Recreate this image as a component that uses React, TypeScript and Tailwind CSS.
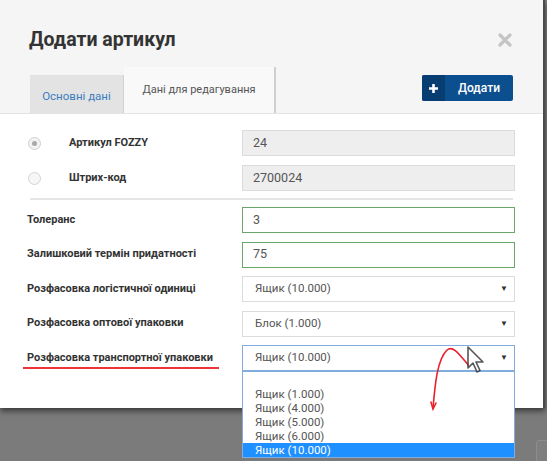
import React from 'react'

function TextBox({ value, tone }: { value: string; tone: 'gray' | 'green' }) {
  const cls =
    tone === 'gray'
      ? 'bg-[#eeeeee] border-[#dcdcdc]'
      : 'bg-white border-[#6aa56a]'
  return (
    <div className={`w-[273px] h-[26px] border ${cls} flex items-center pl-[10px] text-[12.5px] text-[#555]`}>
      {value}
    </div>
  )
}

function SelectBox({ value, active }: { value: string; active?: boolean }) {
  return (
    <div
      className={`w-[273px] h-[26px] border ${
        active ? 'border-[#82acdc]' : 'border-[#dcdcdc]'
      } bg-white flex items-center pl-[12px] pr-[6px] text-[11.5px] text-[#555]`}
    >
      <span className="flex-1">{value}</span>
      <span className="text-[8px] text-[#333]">▼</span>
    </div>
  )
}

function Row({ label, children }: { label: string; children: React.ReactNode }) {
  return (
    <div className="flex items-center h-[26px]">
      <div className="w-[215px] text-[11px] font-bold text-[#333]">{label}</div>
      {children}
    </div>
  )
}

export default function App() {
  const options = ['Ящик (1.000)', 'Ящик (4.000)', 'Ящик (5.000)', 'Ящик (6.000)', 'Ящик (10.000)']

  return (
    <div className="w-[547px] h-[461px] bg-[#7b7b7b] relative overflow-hidden font-['Roboto',sans-serif]">
      {/* faint button edge in the page behind */}
      <div className="absolute left-[536px] top-[440px] w-[20px] h-[28px] rounded-[3px] border border-[#8c8c8c] bg-[#7f7f7f]" />

      {/* modal */}
      <div className="w-[545px] h-[408px] bg-white border-r-2 border-[#4a4a4a] shadow-[0_3px_6px_rgba(0,0,0,0.55)] relative">
        {/* header */}
        <div className="h-[114px] bg-[#f5f5f5] border-b border-[#e3e3e3] pl-[29px] pr-[30px] pt-[28px]">
          <div className="flex items-center justify-between h-[24px]">
            <h1 className="text-[19.5px] font-bold text-[#333]">Додати артикул</h1>
            <svg width="14" height="14" viewBox="0 0 14 14" className="mr-[1px]">
              <path d="M2 2l10 10M12 2L2 12" stroke="#c4c4c4" strokeWidth="3.2" strokeLinecap="round" />
            </svg>
          </div>

          <div className="flex h-[46px] mt-[15px]">
            <div className="ml-[1px] self-end w-[94px] h-[38px] bg-[#e3e3e3] border-r border-[#d2d2d2] flex items-center justify-center pt-[6px] text-[11.5px] text-[#3b7dc0]">
              Основні дані
            </div>
            <div className="w-[152px] h-[46px] bg-[#f9f9f9] border-r-2 border-[#cfcfcf] flex items-center justify-center text-[11px] text-[#555]">
              Дані для редагування
            </div>
            <button className="ml-auto mt-[8px] h-[26px] w-[91px] flex rounded-[2px] overflow-hidden bg-[#0c4f8f] text-white">
              <span className="w-[23px] h-full bg-[#073d70] flex items-center justify-center">
                <svg width="11" height="11" viewBox="0 0 11 11">
                  <path d="M5.5 1v9M1 5.5h9" stroke="#fff" strokeWidth="2.6" />
                </svg>
              </span>
              <span className="flex-1 flex items-center justify-center text-[12px] font-medium">Додати</span>
            </button>
          </div>
        </div>

        {/* body */}
        <div className="pt-[16px] pl-[27px]">
          <div className="flex flex-col gap-[9px]">
            <div className="flex items-center h-[26px]">
              <span className="w-[13px] h-[13px] rounded-full border border-[#cfcfcf] bg-[#f3f3f3] flex items-center justify-center ml-[1px]">
                <span className="w-[5px] h-[5px] rounded-full bg-[#a9a9a9]" />
              </span>
              <span className="ml-[28px] w-[173px] text-[11px] font-bold text-[#333]">Артикул FOZZY</span>
              <TextBox value="24" tone="gray" />
            </div>
            <div className="flex items-center h-[26px]">
              <span className="w-[13px] h-[13px] rounded-full border border-[#d5d5d5] bg-[#f6f6f6] ml-[1px]" />
              <span className="ml-[28px] w-[173px] text-[11px] font-bold text-[#333]">Штрих-код</span>
              <TextBox value="2700024" tone="gray" />
            </div>
          </div>

          <div className="ml-[3px] mr-[30px] mt-[7px] h-[2px] bg-[#e6e6e6]" />

          <div className="flex flex-col gap-[8.5px] mt-[7px]">
            <Row label="Толеранс">
              <TextBox value="3" tone="green" />
            </Row>
            <Row label="Залишковий термін придатності">
              <TextBox value="75" tone="green" />
            </Row>
            <Row label="Розфасовка логістичної одиниці">
              <SelectBox value="Ящик (10.000)" />
            </Row>
            <Row label="Розфасовка оптової упаковки">
              <SelectBox value="Блок (1.000)" />
            </Row>
            <Row label="Розфасовка транспортної упаковки">
              <SelectBox value="Ящик (10.000)" active />
            </Row>
          </div>
        </div>

        {/* red underline */}
        <div className="absolute left-[23px] top-[367px] w-[196px] h-[2px] bg-[#ee3338]" />
      </div>

      {/* open dropdown list */}
      <div className="absolute left-[242px] top-[371px] w-[273px] h-[87px] bg-white border border-[#82acdc] pt-[15px] text-[11.5px] leading-[14px] text-[#555]">
        {options.map((o, i) => (
          <div
            key={o}
            className={`pl-[12px] h-[14px] ${i === options.length - 1 ? 'bg-[#1e90ff] text-white' : ''}`}
          >
            {o}
          </div>
        ))}
      </div>

      {/* red hand-drawn arrow */}
      <svg className="absolute left-[425px] top-[340px]" width="60" height="75" viewBox="0 0 60 75">
        <path
          d="M8 68 C 10 45, 12 20, 22 10 C 28 5, 34 14, 44 26"
          stroke="#e8212a"
          strokeWidth="1.6"
          fill="none"
          strokeLinecap="round"
        />
        <path d="M6 62 L8 69 L11 63" stroke="#e8212a" strokeWidth="1.6" fill="none" strokeLinecap="round" />
      </svg>

      {/* mouse cursor */}
      <svg className="absolute left-[466px] top-[346px]" width="20" height="30" viewBox="0 0 20 30">
        <path
          d="M2 1 L2 22 L7 17 L11 26 L14 24.5 L10 16 L17 16 Z"
          fill="#fff"
          stroke="#3a3a3a"
          strokeWidth="1.6"
          strokeLinejoin="round"
          opacity="0.85"
        />
      </svg>
    </div>
  )
}
